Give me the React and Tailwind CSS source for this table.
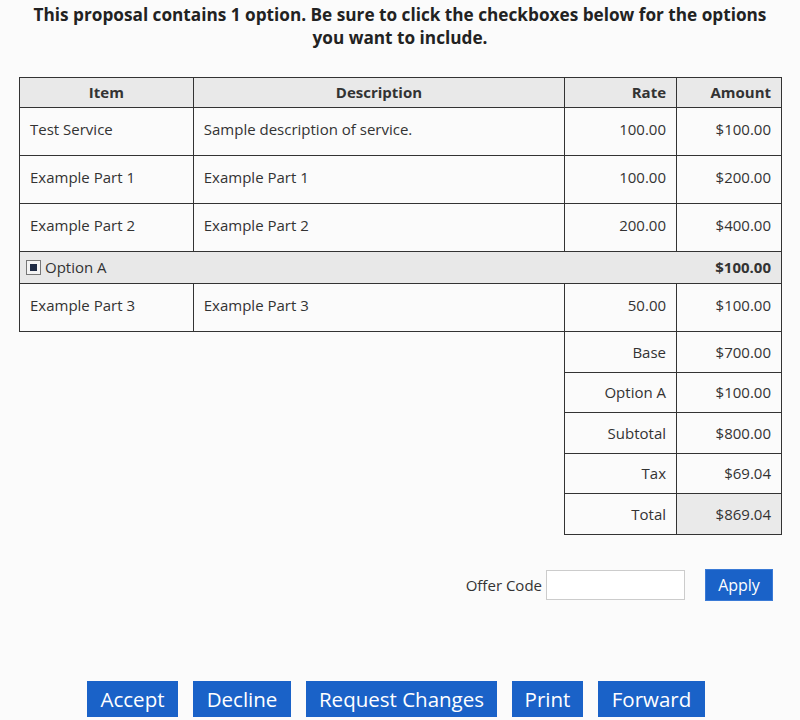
import React from 'react';

const rows = [
    { item: 'Test Service', desc: 'Sample description of service.', rate: '100.00', amount: '$100.00' },
    { item: 'Example Part 1', desc: 'Example Part 1', rate: '100.00', amount: '$200.00' },
    { item: 'Example Part 2', desc: 'Example Part 2', rate: '200.00', amount: '$400.00' },
];

const totals = [
    ['Base', '$700.00'],
    ['Option A', '$100.00'],
    ['Subtotal', '$800.00'],
    ['Tax', '$69.04'],
];

const cell = 'border border-[#333] px-[10px]';

const App = () => {
    return (
        <div className="min-h-[720px] bg-[#fbfbfb] text-[#333] pt-[3px]" style={{ fontFamily: '"Open Sans", "Noto Sans", sans-serif' }}>
            <h1 className="text-center text-[17.2px] leading-[23px] font-bold text-[#222] px-[30px]">
                This proposal contains 1 option. Be sure to click the checkboxes below for the options you want to include.
            </h1>

            <div className="px-[19px] mt-[28px]">
                <table className="w-[763px] border-collapse text-[15px]">
                    <colgroup>
                        <col className="w-[174px]" />
                        <col className="w-[372px]" />
                        <col className="w-[112px]" />
                        <col className="w-[105px]" />
                    </colgroup>
                    <thead>
                        <tr className="h-[30px] bg-[#e9e9e9] font-bold">
                            <th className={`${cell} text-center`}>Item</th>
                            <th className={`${cell} text-center`}>Description</th>
                            <th className={`${cell} text-right`}>Rate</th>
                            <th className={`${cell} text-right`}>Amount</th>
                        </tr>
                    </thead>
                    <tbody>
                        {rows.map((r) => (
                            <tr key={r.item} className="h-[48px]">
                                <td className={`${cell} pb-[5px]`}>{r.item}</td>
                                <td className={`${cell} pb-[5px]`}>{r.desc}</td>
                                <td className={`${cell} pb-[5px] text-right`}>{r.rate}</td>
                                <td className={`${cell} pb-[5px] text-right`}>{r.amount}</td>
                            </tr>
                        ))}
                        <tr className="h-[32px] bg-[#e8e8e8] border border-[#333]">
                            <td colSpan={3} className="px-[6px]">
                                <div className="flex items-center gap-[4px]">
                                    <span className="w-[15px] h-[15px] border border-[#777] bg-[#f4f4f4] flex items-center justify-center">
                                        <span className="w-[7px] h-[7px] bg-[#1e2a44]" />
                                    </span>
                                    <span>Option A</span>
                                </div>
                            </td>
                            <td className="px-[10px] text-right font-bold">$100.00</td>
                        </tr>
                        <tr className="h-[48px]">
                            <td className={`${cell} pb-[5px]`}>Example Part 3</td>
                            <td className={`${cell} pb-[5px]`}>Example Part 3</td>
                            <td className={`${cell} pb-[5px] text-right`}>50.00</td>
                            <td className={`${cell} pb-[5px] text-right`}>$100.00</td>
                        </tr>
                        {totals.map(([label, value]) => (
                            <tr key={label} className="h-[40.6px]">
                                <td colSpan={2} />
                                <td className={`${cell} text-right`}>{label}</td>
                                <td className={`${cell} text-right`}>{value}</td>
                            </tr>
                        ))}
                        <tr className="h-[40.6px]">
                            <td colSpan={2} />
                            <td className={`${cell} text-right`}>Total</td>
                            <td className={`${cell} text-right bg-[#eaeaea]`}>$869.04</td>
                        </tr>
                    </tbody>
                </table>
            </div>

            <div className="flex justify-end items-center mt-[34px] pr-[27px] text-[15px]">
                <span className="mr-[4px]">Offer Code</span>
                <input className="w-[139px] h-[30px] border border-[#ccc] bg-white outline-none" />
                <button className="ml-[20px] w-[68px] h-[32px] bg-[#1a62c8] text-white text-[16px] border border-[#3a7ad6]">Apply</button>
            </div>

            <div className="flex justify-center gap-[15px] mt-[80px] pr-[8px] text-[20.5px] text-white">
                <button className="h-[36px] w-[91px] bg-[#1a62c8]">Accept</button>
                <button className="h-[36px] w-[98px] bg-[#1a62c8]">Decline</button>
                <button className="h-[36px] w-[191px] bg-[#1a62c8]">Request Changes</button>
                <button className="h-[36px] w-[71px] bg-[#1a62c8]">Print</button>
                <button className="h-[36px] w-[107px] bg-[#1a62c8]">Forward</button>
            </div>
        </div>
    );
};

export default App;
